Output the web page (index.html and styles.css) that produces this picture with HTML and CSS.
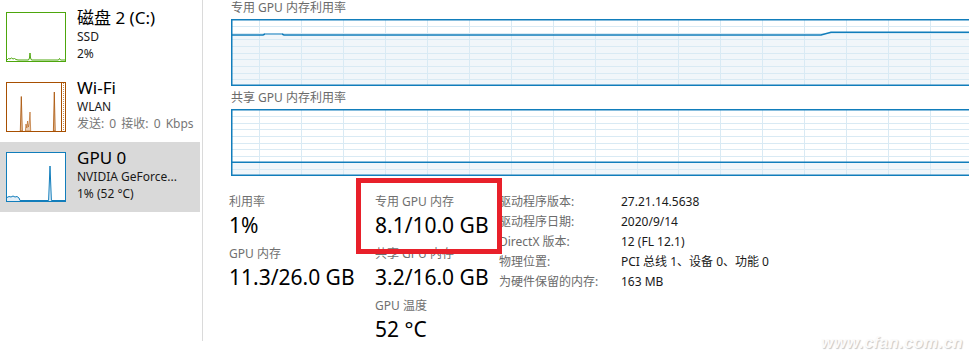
FILE: index.html
```html
<!DOCTYPE html>
<html lang="zh-CN">
<head>
<meta charset="utf-8">
<title>GPU 0</title>
<link rel="stylesheet" href="styles.css">
</head>
<body>
<div class="app">
  <aside class="sidebar">
    <div class="item">
      <div class="thumb thumb-disk">
        <svg width="58" height="48" viewBox="0 0 58 48">
          <polyline points="0,47 1.5,45.5 3,46 4.5,45 6,46 7.5,45.5 9,46.5 11,47 21.5,47 22.5,45 23,40 23.5,45 24.5,47 51.5,47 52.5,45.5 53.5,47 58,47" fill="none" stroke="#4da60c" stroke-width="1"/>
        </svg>
      </div>
      <div class="info">
        <div class="title">磁盘 2 (C:)</div>
        <div class="sub">SSD</div>
        <div class="sub">2%</div>
      </div>
    </div>
    <div class="item">
      <div class="thumb thumb-net">
        <svg width="58" height="48" viewBox="0 0 58 48">
          <polygon points="13.3,48 14.3,13.5 15.3,48" fill="#eccfb4" stroke="#a74f01" stroke-width="0.8"/>
          <polygon points="18.4,48 19,41 19.8,45 20.6,38 21.4,44 22.2,40 23,29 23.7,48" fill="#eccfb4" stroke="#b96a25" stroke-width="0.7"/>
          <polygon points="46.4,48 47.3,9 48.2,48" fill="#eccfb4" stroke="#a74f01" stroke-width="0.8"/>
          <line x1="54.5" y1="0" x2="54.5" y2="48" stroke="#a74f01" stroke-width="1"/>
          <line x1="56.5" y1="0" x2="56.5" y2="48" stroke="#c98a52" stroke-width="1" stroke-dasharray="1 1"/>
        </svg>
      </div>
      <div class="info">
        <div class="title">Wi-Fi</div>
        <div class="sub">WLAN</div>
        <div class="sub muted">发送: 0 接收: 0 Kbps</div>
      </div>
    </div>
    <div class="item selected">
      <div class="thumb thumb-gpu">
        <svg width="58" height="48" viewBox="0 0 58 48">
          <polygon points="0,44.5 2,43.5 4,44 6,43 8,44 10,43.5 12,45 13,47.5 41.6,47.5 43,13 44.4,47.5 58,47.5 58,48 0,48" fill="#e3eef7"/>
          <polyline points="0,44.5 2,43.5 4,44 6,43 8,44 10,43.5 12,45 13,47.5 41.6,47.5 43,13 44.4,47.5 58,47.5" fill="none" stroke="#117dbb" stroke-width="1"/>
        </svg>
      </div>
      <div class="info">
        <div class="title">GPU 0</div>
        <div class="sub">NVIDIA GeForce...</div>
        <div class="sub">1% (52 °C)</div>
      </div>
    </div>
  </aside>

  <main class="main">
    <div class="graph-label">专用 GPU 内存利用率</div>
    <svg class="graph" width="742" height="67" viewBox="0 0 742 67">
      <polygon points="0,16 32,16 34,15 51,15 53,16 590,16 600,13.3 742,13.3 742,67 0,67" fill="#f1f6fa"/>
      <g stroke="#d9eaf4" stroke-width="1">
        <line x1="0" y1="7.5" x2="742" y2="7.5"/>
        <line x1="0" y1="14.5" x2="742" y2="14.5"/>
        <line x1="0" y1="20.5" x2="742" y2="20.5"/>
        <line x1="0" y1="27.5" x2="742" y2="27.5"/>
        <line x1="0" y1="34.5" x2="742" y2="34.5"/>
        <line x1="0" y1="40.5" x2="742" y2="40.5"/>
        <line x1="0" y1="47.5" x2="742" y2="47.5"/>
        <line x1="0" y1="54.5" x2="742" y2="54.5"/>
        <line x1="0" y1="60.5" x2="742" y2="60.5"/>
        <line x1="28.5" y1="0" x2="28.5" y2="67"/>
        <line x1="70.5" y1="0" x2="70.5" y2="67"/>
        <line x1="112.5" y1="0" x2="112.5" y2="67"/>
        <line x1="154.5" y1="0" x2="154.5" y2="67"/>
        <line x1="196.5" y1="0" x2="196.5" y2="67"/>
        <line x1="238.5" y1="0" x2="238.5" y2="67"/>
        <line x1="280.5" y1="0" x2="280.5" y2="67"/>
        <line x1="322.5" y1="0" x2="322.5" y2="67"/>
        <line x1="364.5" y1="0" x2="364.5" y2="67"/>
        <line x1="406.5" y1="0" x2="406.5" y2="67"/>
        <line x1="447.5" y1="0" x2="447.5" y2="67"/>
        <line x1="489.5" y1="0" x2="489.5" y2="67"/>
        <line x1="531.5" y1="0" x2="531.5" y2="67"/>
        <line x1="573.5" y1="0" x2="573.5" y2="67"/>
        <line x1="615.5" y1="0" x2="615.5" y2="67"/>
        <line x1="657.5" y1="0" x2="657.5" y2="67"/>
        <line x1="699.5" y1="0" x2="699.5" y2="67"/>
        <line x1="741.5" y1="0" x2="741.5" y2="67"/>
      </g>
      <polyline points="0,16 32,16 34,15 51,15 53,16 590,16 600,13.3 742,13.3" fill="none" stroke="#117dbb" stroke-width="1.6"/>
      <line x1="34" y1="15" x2="51" y2="15" stroke="#8fc1e0" stroke-width="1.6"/>
      <rect x="0.75" y="0.75" width="750" height="65.5" fill="none" stroke="#117dbb" stroke-width="1.5"/>
    </svg>

    <div class="graph-label second">共享 GPU 内存利用率</div>
    <svg class="graph" width="742" height="67" viewBox="0 0 742 67">
      <polygon points="0,53.3 742,53.3 742,67 0,67" fill="#f1f6fa"/>
      <g stroke="#d9eaf4" stroke-width="1">
        <line x1="0" y1="7.5" x2="742" y2="7.5"/>
        <line x1="0" y1="14.5" x2="742" y2="14.5"/>
        <line x1="0" y1="20.5" x2="742" y2="20.5"/>
        <line x1="0" y1="27.5" x2="742" y2="27.5"/>
        <line x1="0" y1="34.5" x2="742" y2="34.5"/>
        <line x1="0" y1="40.5" x2="742" y2="40.5"/>
        <line x1="0" y1="47.5" x2="742" y2="47.5"/>
        <line x1="0" y1="60.5" x2="742" y2="60.5"/>
        <line x1="28.5" y1="0" x2="28.5" y2="67"/>
        <line x1="70.5" y1="0" x2="70.5" y2="67"/>
        <line x1="112.5" y1="0" x2="112.5" y2="67"/>
        <line x1="154.5" y1="0" x2="154.5" y2="67"/>
        <line x1="196.5" y1="0" x2="196.5" y2="67"/>
        <line x1="238.5" y1="0" x2="238.5" y2="67"/>
        <line x1="280.5" y1="0" x2="280.5" y2="67"/>
        <line x1="322.5" y1="0" x2="322.5" y2="67"/>
        <line x1="364.5" y1="0" x2="364.5" y2="67"/>
        <line x1="406.5" y1="0" x2="406.5" y2="67"/>
        <line x1="447.5" y1="0" x2="447.5" y2="67"/>
        <line x1="489.5" y1="0" x2="489.5" y2="67"/>
        <line x1="531.5" y1="0" x2="531.5" y2="67"/>
        <line x1="573.5" y1="0" x2="573.5" y2="67"/>
        <line x1="615.5" y1="0" x2="615.5" y2="67"/>
        <line x1="657.5" y1="0" x2="657.5" y2="67"/>
        <line x1="699.5" y1="0" x2="699.5" y2="67"/>
        <line x1="741.5" y1="0" x2="741.5" y2="67"/>
      </g>
      <line x1="0" y1="53.3" x2="742" y2="53.3" stroke="#117dbb" stroke-width="1.6"/>
      <rect x="0.75" y="0.75" width="750" height="65.5" fill="none" stroke="#117dbb" stroke-width="1.5"/>
    </svg>

    <div class="stats">
      <div class="col col-a">
        <div class="stat"><div class="lbl">利用率</div><div class="val">1%</div></div>
        <div class="stat"><div class="lbl">GPU 内存</div><div class="val">11.3/26.0 GB</div></div>
      </div>
      <div class="col col-b">
        <div class="stat"><div class="lbl">专用 GPU 内存</div><div class="val">8.1/10.0 GB</div></div>
        <div class="stat"><div class="lbl">共享 GPU 内存</div><div class="val">3.2/16.0 GB</div></div>
        <div class="stat"><div class="lbl">GPU 温度</div><div class="val">52 °C</div></div>
      </div>
      <dl class="props">
        <dt>驱动程序版本:</dt><dd>27.21.14.5638</dd>
        <dt>驱动程序日期:</dt><dd>2020/9/14</dd>
        <dt>DirectX 版本:</dt><dd>12 (FL 12.1)</dd>
        <dt>物理位置:</dt><dd>PCI 总线 1、设备 0、功能 0</dd>
        <dt>为硬件保留的内存:</dt><dd>163 MB</dd>
      </dl>
      <div class="highlight"></div>
    </div>
  </main>
</div>
<div class="watermark">www.cfan.com.cn</div>
</body>
</html>
```

FILE: styles.css
```css
html, body {
  margin: 0;
  padding: 0;
  background: #ffffff;
  overflow: hidden;
}

body {
  width: 969px;
  height: 360px;
  position: relative;
  font-family: "Noto Sans", "Noto Sans CJK SC", sans-serif;
  color: #000;
}

.app {
  display: flex;
  align-items: flex-start;
}

.sidebar {
  width: 203px;
  height: 341px;
  border-right: 1px solid #dadada;
  padding-top: 2px;
  box-sizing: border-box;
  flex: none;
}

.item {
  width: 200px;
  height: 70px;
  display: flex;
  align-items: flex-start;
  box-sizing: border-box;
  padding-left: 6px;
}

.item.selected {
  background: #d9d9d9;
}

.thumb {
  width: 58px;
  height: 48px;
  margin-top: 10px;
  border: 1px solid #117dbb;
  background: #ffffff;
  flex: none;
}

.thumb svg {
  display: block;
}

.thumb-disk { border-color: #4da60c; }
.thumb-net { border-color: #a74f01; }
.thumb-gpu { border-color: #117dbb; }

.info {
  margin-left: 11px;
  padding-top: 6px;
  white-space: nowrap;
}

.title {
  font-size: 17px;
  line-height: 20px;
  color: #000;
}

.sub {
  font-size: 12px;
  line-height: 17px;
  color: #1a1a1a;
}

.sub.muted {
  color: #767676;
  word-spacing: 2px;
}

.main {
  flex: 1;
  min-width: 0;
  padding-left: 28px;
  overflow: hidden;
}

.graph-label {
  font-size: 12px;
  line-height: 16px;
  color: #6b6b6b;
  height: 16px;
}

.graph-label.second {
  margin-top: 4px;
}

.graph {
  display: block;
  margin-top: 3px;
}

.stats {
  position: relative;
  margin-top: 16px;
  margin-left: -2px;
  display: flex;
  align-items: flex-start;
}

.col-a { width: 146px; flex: none; }
.col-b { width: 124px; flex: none; }

.stat {
  height: 52px;
}

.lbl {
  font-size: 12px;
  line-height: 20px;
  color: #707070;
  white-space: nowrap;
}

.val {
  font-size: 21px;
  line-height: 26px;
  color: #000;
  white-space: nowrap;
}

.props {
  margin: 0;
  display: grid;
  grid-template-columns: 122px auto;
  font-size: 12px;
  line-height: 20px;
}

.props dt {
  color: #6b6b6b;
  white-space: nowrap;
}

.props dd {
  margin: 0;
  color: #1a1a1a;
  white-space: nowrap;
}

.highlight {
  position: absolute;
  left: 127px;
  top: -14px;
  width: 146px;
  height: 76px;
  box-sizing: border-box;
  border: 5px solid #e8202a;
}

.watermark {
  position: absolute;
  right: 6px;
  bottom: 8px;
  font-family: "Liberation Sans", sans-serif;
  font-size: 16px;
  font-weight: bold;
  font-style: italic;
  letter-spacing: 0.5px;
  color: #fbfbfb;
  text-shadow: 1px 1px 1px #c8c8c8;
}
```
